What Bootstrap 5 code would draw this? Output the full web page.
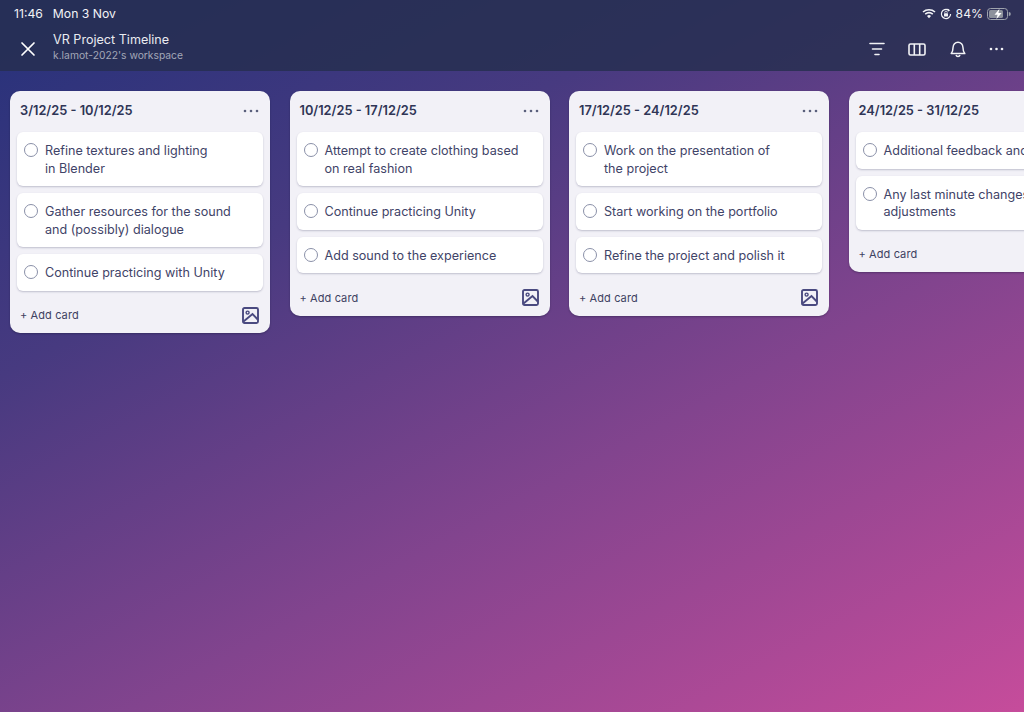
<!DOCTYPE html>
<html lang="en">
<head>
    <meta charset="UTF-8">
    <meta name="viewport" content="width=device-width, initial-scale=1.0">
    <title>VR Project Timeline</title>
    <link href="https://cdn.jsdelivr.net/npm/bootstrap@5.3.0/dist/css/bootstrap.min.css" rel="stylesheet">
    <style>
        html, body { height: 100%; }
        body {
            width: 1024px;
            height: 712px;
            overflow: hidden;
            font-family: Inter, "Liberation Sans", sans-serif;
            background: linear-gradient(152deg, #25317a 0%, #473a80 30%, #82448e 62%, #c64c9b 100%);
        }
        .top-area { height: 71px; background: rgba(38, 46, 80, .84); color: #fff; flex-shrink: 0; }
        .status-row { height: 28px; padding: 0 13px 0 14px; font-size: 12.2px; color: #f2f3f6; }
        .status-gap { gap: 10px; }
        .head-row { height: 43px; padding-left: 20px; padding-right: 20px; }
        .close-x { width: 16px; height: 16px; margin-right: 17px; margin-top: -1px; }
        .board-name { font-size: 12.6px; line-height: 16px; color: #e9ebf0; margin-top: -5px; }
        .workspace { font-size: 10.3px; line-height: 15px; color: #a3a7b8; }
        .tool-group { gap: 23.5px; margin-top: -1px; }
        .board { padding: 20px 0 0 10px; gap: 19.5px; }
        .task-list {
            width: 260px;
            flex-shrink: 0;
            background: #f2f1f7;
            border-radius: 10px;
            padding: 0 7px;
            box-shadow: 0 1px 2px rgba(20, 20, 50, .35);
        }
        .list-head { height: 41px; padding: 0 4px 2px 3px; }
        .list-title { font-size: 12.8px; font-weight: 600; color: #2f3556; }
        .task-card {
            background: #fff;
            border-radius: 6px;
            padding: 10px 8px 9px 7px;
            margin-bottom: 7px;
            font-size: 12.6px;
            line-height: 17.5px;
            color: #3f4468;
            box-shadow: 0 1px 2px rgba(60, 60, 100, .28);
            white-space: nowrap;
            overflow: hidden;
        }
        .task-ring {
            width: 14px;
            height: 14px;
            border: 1.8px solid #8a90a8;
            border-radius: 50%;
            flex-shrink: 0;
            margin-top: 1px;
            margin-right: 7px;
        }
        .list-foot { margin-top: -7px; padding: 7px 4px 0 3px; height: 42.5px; }
        .add-label { font-size: 11px; color: #3e4262; letter-spacing: .1px; }
    </style>
</head>
<body class="d-flex flex-column">

    <!-- Status bar and board header -->
    <div class="top-area">
        <div class="status-row d-flex align-items-center justify-content-between">
            <div class="d-flex status-gap"><span>11:46</span><span>Mon 3 Nov</span></div>
            <div class="d-flex align-items-center gap-1">
                <svg width="14" height="11" viewBox="0 0 14 11"><path d="M1 4 A9 9 0 0 1 13 4 M3.2 6.2 A6 6 0 0 1 10.8 6.2" fill="none" stroke="#f2f3f6" stroke-width="1.6"/><path d="M5 8 A3 3 0 0 1 9 8 L7 10.2Z" fill="#f2f3f6"/></svg>
                <svg width="12" height="12" viewBox="0 0 12 12"><path d="M10.6 6 A4.6 4.6 0 1 1 8.5 2.1" fill="none" stroke="#f2f3f6" stroke-width="1.2"/><path d="M7.6 .6 L10.2 2.2 L7.8 3.8Z" fill="#f2f3f6"/><rect x="4" y="5.2" width="4" height="3.2" rx=".5" fill="#f2f3f6"/><path d="M4.8 5.2 V4.4 A1.2 1.2 0 0 1 7.2 4.4 V5.2" fill="none" stroke="#f2f3f6" stroke-width=".8"/></svg>
                <span>84%</span>
                <svg width="24" height="12" viewBox="0 0 24 12"><rect x=".5" y=".5" width="20" height="11" rx="3" fill="none" stroke="#9ea3ad"/><rect x="2" y="2" width="14" height="8" rx="1.6" fill="#8d929c"/><path d="M21.8 4 a2 2 0 0 1 0 4Z" fill="#9ea3ad"/><path d="M12.5 .8 L7.5 6.8 H10.6 L9.4 11.2 L14.6 5 H11.4Z" fill="#fff"/></svg>
            </div>
        </div>
        <div class="head-row d-flex align-items-center">
            <svg class="close-x" viewBox="0 0 16 16"><path d="M2 2 L14 14 M14 2 L2 14" stroke="#fff" stroke-width="1.7" stroke-linecap="round"/></svg>
            <div class="flex-grow-1">
                <div class="board-name">VR Project Timeline</div>
                <div class="workspace">k.lamot-2022's workspace</div>
            </div>
            <div class="d-flex align-items-center tool-group">
                <svg width="16" height="14" viewBox="0 0 16 14"><path d="M1 1.5 H15 M3.5 7 H12.5 M6 12.5 H10" stroke="#f2f3f6" stroke-width="1.6" stroke-linecap="round"/></svg>
                <svg width="18" height="13" viewBox="0 0 18 13"><rect x="1" y="1" width="16" height="11" rx="1.5" fill="none" stroke="#f2f3f6" stroke-width="1.6"/><path d="M6.3 1 V12 M11.7 1 V12" stroke="#f2f3f6" stroke-width="1.6"/></svg>
                <svg width="16" height="17" viewBox="0 0 16 17"><path d="M1.2 12.6 C2.8 11 3 9.4 3 6.8 A5 5.6 0 0 1 13 6.8 C13 9.4 13.2 11 14.8 12.6 Z" fill="none" stroke="#f2f3f6" stroke-width="1.5" stroke-linejoin="round"/><path d="M6 14 A2.1 2.1 0 0 0 10 14" fill="none" stroke="#f2f3f6" stroke-width="1.5"/></svg>
                <svg width="15" height="4" viewBox="0 0 15 4"><circle cx="2" cy="2" r="1.3" fill="#f2f3f6"/><circle cx="7.5" cy="2" r="1.3" fill="#f2f3f6"/><circle cx="13" cy="2" r="1.3" fill="#f2f3f6"/></svg>
            </div>
        </div>
    </div>

    <!-- Board lists -->
    <div class="board d-flex align-items-start" id="board"></div>

    <script src="https://cdn.jsdelivr.net/npm/bootstrap@5.3.0/dist/js/bootstrap.bundle.min.js"></script>
    <script>
        const lists = [
            { title: '3/12/25 - 10/12/25', cards: ['Refine textures and lighting<br>in Blender', 'Gather resources for the sound<br>and (possibly) dialogue', 'Continue practicing with Unity'] },
            { title: '10/12/25 - 17/12/25', cards: ['Attempt to create clothing based<br>on real fashion', 'Continue practicing Unity', 'Add sound to the experience'] },
            { title: '17/12/25 - 24/12/25', cards: ['Work on the presentation of<br>the project', 'Start working on the portfolio', 'Refine the project and polish it'] },
            { title: '24/12/25 - 31/12/25', cards: ['Additional feedback and changes', 'Any last minute changes and<br>adjustments'], noPhoto: true }
        ];

        const dots = '<svg width="16" height="4" viewBox="0 0 16 4"><circle cx="2" cy="2" r="1.3" fill="#5a5f7c"/><circle cx="8" cy="2" r="1.3" fill="#5a5f7c"/><circle cx="14" cy="2" r="1.3" fill="#5a5f7c"/></svg>';
        const photo = '<svg width="17" height="17" viewBox="0 0 17 17"><rect x="1" y="1" width="15" height="15" rx="1.5" fill="none" stroke="#4a4a80" stroke-width="1.9"/><circle cx="5.6" cy="5.6" r="1.5" fill="none" stroke="#4a4a80" stroke-width="1.4"/><path d="M1.5 14.5 L10.5 7 L15.8 12.5" fill="none" stroke="#4a4a80" stroke-width="1.9"/></svg>';

        document.getElementById('board').innerHTML = lists.map(list => `
            <div class="task-list">
                <div class="list-head d-flex align-items-center justify-content-between">
                    <span class="list-title">${list.title}</span>${list.noPhoto ? '' : dots}
                </div>
                ${list.cards.map(text => `
                    <div class="task-card d-flex"><span class="task-ring"></span><span>${text}</span></div>`).join('')}
                <div class="list-foot d-flex align-items-center justify-content-between">
                    <span class="add-label">+ Add card</span>${list.noPhoto ? '' : photo}
                </div>
            </div>`).join('');
    </script>
</body>
</html>
